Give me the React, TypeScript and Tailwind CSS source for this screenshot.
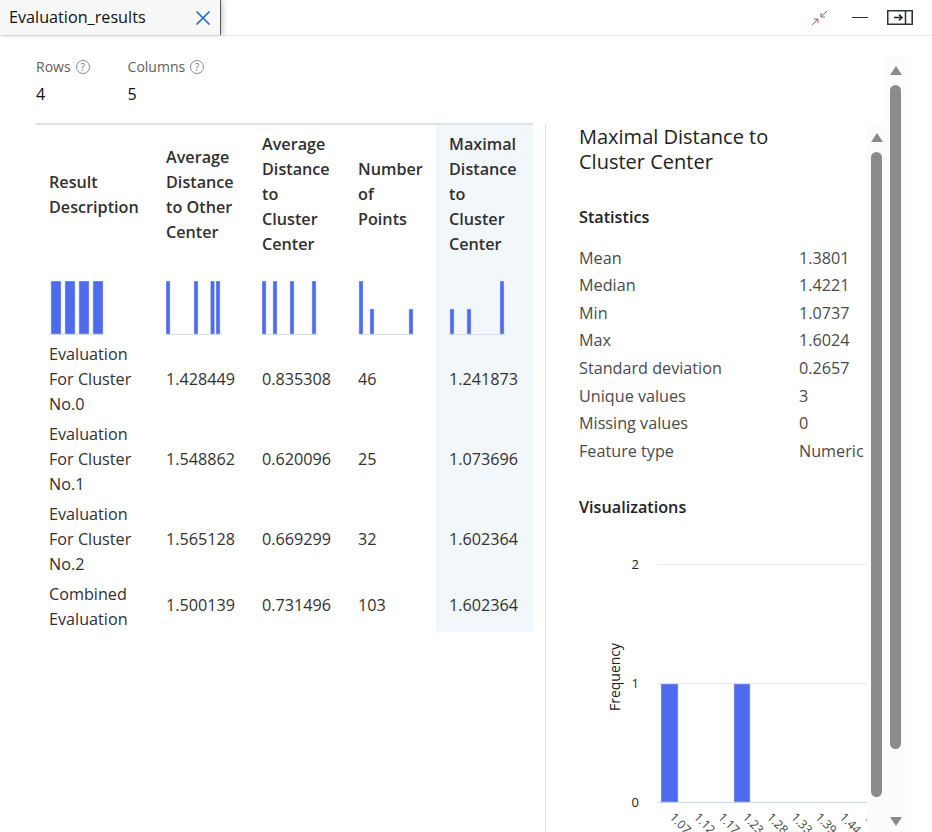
import { X } from "lucide-react"

const rows = [
  { name: ["Evaluation", "For Cluster", "No.0"], a: "1.428449", b: "0.835308", c: "46", d: "1.241873" },
  { name: ["Evaluation", "For Cluster", "No.1"], a: "1.548862", b: "0.620096", c: "25", d: "1.073696" },
  { name: ["Evaluation", "For Cluster", "No.2"], a: "1.565128", b: "0.669299", c: "32", d: "1.602364" },
  { name: ["Combined", "Evaluation"], a: "1.500139", b: "0.731496", c: "103", d: "1.602364" },
]

const stats = [
  ["Mean", "1.3801"],
  ["Median", "1.4221"],
  ["Min", "1.0737"],
  ["Max", "1.6024"],
  ["Standard deviation", "0.2657"],
  ["Unique values", "3"],
  ["Missing values", "0"],
  ["Feature type", "Numeric"],
]

// [x, height, width] for every bar of the mini charts
const sparks = [
  { bars: [[2, 53, 10], [16, 53, 10], [30, 53, 10], [44, 53, 10]] },
  { bars: [[0, 53, 4], [28, 53, 4], [44.5, 53, 4], [50, 53, 4]] },
  { bars: [[0, 53, 4], [11, 53, 4], [28, 53, 4], [50, 53, 4]] },
  { bars: [[1, 53, 4], [12, 25, 4], [51, 25, 4]] },
  { bars: [[1, 25, 4], [18, 25, 4], [51, 53, 4]] },
]

const xLabels = ["1.07", "1.12", "1.17", "1.23", "1.28", "1.33", "1.39", "1.44", "1.49"]

function Spark({ bars }: { bars: number[][] }) {
  return (
    <svg width="56" height="56" viewBox="0 0 56 56" className="block">
      <line x1="0" x2="56" y1="53.5" y2="53.5" stroke="#d5dcf3" strokeWidth="1" />
      {bars.map(([x, h, w]) => (
        <rect key={x} x={x} y={53 - h} width={w} height={h} fill="#4f6bed" stroke="#c3cdf7" strokeWidth="0.5" />
      ))}
    </svg>
  )
}

function HelpIcon() {
  return (
    <span className="inline-flex w-[14px] h-[14px] items-center justify-center rounded-full border border-[#8a8a8a] text-[10px] leading-none text-[#777]">
      ?
    </span>
  )
}

function Scrollbar({ thumbH, down }: { thumbH: string; down?: boolean }) {
  return (
    <div className="flex flex-col items-center h-full bg-[#fcfcfc]">
      <div className="w-0 h-0 border-x-[6px] border-x-transparent border-b-[9px] border-b-[#8b8b8b] mt-[10px] mb-[10px]" />
      <div className={`w-[11px] rounded-full bg-[#8b8b8b] ${thumbH}`} />
      {down && <div className="w-0 h-0 border-x-[6px] border-x-transparent border-t-[9px] border-t-[#8b8b8b] mt-[68px]" />}
    </div>
  )
}

function Histogram() {
  return (
    <svg width="288" height="310" viewBox="0 0 288 310" className="block shrink-0 mt-[2px]">
      <line x1="79" x2="288" y1="42.5" y2="42.5" stroke="#eeeeee" />
      <line x1="79" x2="288" y1="161.5" y2="161.5" stroke="#e6e6e6" />
      <line x1="79" x2="288" y1="280.5" y2="280.5" stroke="#ccd6eb" />
      <text x="60" y="47" textAnchor="end" fontSize="13" fill="#222">2</text>
      <text x="60" y="166" textAnchor="end" fontSize="13" fill="#222">1</text>
      <text x="60" y="285" textAnchor="end" fontSize="13" fill="#222">0</text>
      <text x="0" y="0" transform="translate(41 155) rotate(-90)" textAnchor="middle" fontSize="14" fill="#222">
        Frequency
      </text>
      <rect x="82" y="162" width="17" height="118" fill="#4f6bed" stroke="#c3cdf7" strokeWidth="0.5" />
      <rect x="155" y="162" width="16" height="118" fill="#4f6bed" stroke="#c3cdf7" strokeWidth="0.5" />
      {xLabels.map((label, i) => (
        <text
          key={label}
          x="0"
          y="0"
          transform={`translate(${90 + i * 24.3} 296) rotate(45)`}
          fontSize="12"
          fill="#444"
        >
          {label}
        </text>
      ))}
    </svg>
  )
}

export default function App() {
  return (
    <div className="w-[932px] h-[832px] overflow-hidden bg-white text-[16.2px] text-[#323130] font-['Open_Sans',sans-serif]">
      {/* Title bar */}
      <div className="flex h-[36px] items-start border-b border-[#e6e6e6]">
        <div className="flex h-[35px] w-[221px] items-center justify-between border-r border-[#555] bg-[#f8f8f8] pl-[9px] pr-[5px] shadow-[2px_0_5px_rgba(0,0,0,0.2)]">
          <span className="text-[#111]">Evaluation_results</span>
          <X className="w-[24px] h-[24px] text-[#1a6fd0]" strokeWidth={1.75} />
        </div>
        <div className="flex flex-1 items-center justify-end h-[35px] pr-[19px]">
          <svg width="18" height="16" viewBox="0 0 18 16" fill="none">
            <path d="M1 15 L7 9 M7 9 H3 M7 9 V13" stroke="#a0604a" strokeWidth="1" />
            <path d="M16 1 L10 7 M10 7 H14 M10 7 V3" stroke="#60708a" strokeWidth="1" />
          </svg>
          <div className="ml-[23px] w-[16px] h-[1.5px] bg-[#333]" />
          <svg width="26" height="15" viewBox="0 0 26 15" fill="none" className="ml-[19px]">
            <rect x="0.75" y="0.75" width="24.5" height="13.5" stroke="#333" strokeWidth="1.5" />
            <path d="M18.5 1 V14" stroke="#333" strokeWidth="1.5" />
            <path d="M24.5 1 V14" stroke="#4a90d9" strokeWidth="1" />
            <path d="M7 7.5 H15 M12 4.5 L15 7.5 L12 10.5" stroke="#222" strokeWidth="1.5" />
          </svg>
        </div>
      </div>

      <div className="flex h-[796px]">
        {/* Left pane */}
        <div className="w-[545px] shrink-0 pl-[36px]">
          <div className="flex gap-[38px] pt-[19px] h-[87px]">
            <div>
              <div className="flex items-center gap-[5px] text-[14px] leading-[24px] text-[#605e5c]">
                Rows <HelpIcon />
              </div>
              <div className="mt-[3px] text-[16px] leading-[24px] text-[#111]">4</div>
            </div>
            <div>
              <div className="flex items-center gap-[5px] text-[14px] leading-[24px] text-[#605e5c]">
                Columns <HelpIcon />
              </div>
              <div className="mt-[3px] text-[16px] leading-[24px] text-[#111]">5</div>
            </div>
          </div>

          <table className="w-[497px] table-fixed border-t-2 border-[#e1e1e1] leading-[25px]">
            <colgroup>
              <col className="w-[117px]" />
              <col className="w-[96px]" />
              <col className="w-[96px]" />
              <col className="w-[91px]" />
              <col className="w-[97px]" />
            </colgroup>
            <thead>
              <tr className="h-[140px] text-left">
                <th className="pl-[13px] font-semibold">Result<br />Description</th>
                <th className="pl-[13px] font-semibold">Average<br />Distance<br />to Other<br />Center</th>
                <th className="pl-[13px] font-semibold">Average<br />Distance<br />to<br />Cluster<br />Center</th>
                <th className="pl-[13px] font-semibold">Number<br />of<br />Points</th>
                <th className="pl-[13px] font-semibold bg-[#f2f7fc]">Maximal<br />Distance<br />to<br />Cluster<br />Center</th>
              </tr>
            </thead>
            <tbody>
              <tr className="h-[75px]">
                {sparks.map((s, i) => (
                  <td key={i} className={`align-top pt-[17px] pl-[13px] ${i === 4 ? "bg-[#f2f7fc]" : ""}`}>
                    <Spark bars={s.bars} />
                  </td>
                ))}
              </tr>
              {rows.map((r) => (
                <tr key={r.name.join(" ")} className={r.name.length === 3 ? "h-[80px]" : "h-[53px]"}>
                  <td className={`pl-[13px] ${r.name.length === 3 ? "" : "pt-[3px]"}`}>
                    {r.name.map((line) => (
                      <div key={line}>{line}</div>
                    ))}
                  </td>
                  <td className="pl-[13px]">{r.a}</td>
                  <td className="pl-[13px]">{r.b}</td>
                  <td className="pl-[13px]">{r.c}</td>
                  <td className="pl-[13px] bg-[#f2f7fc]">{r.d}</td>
                </tr>
              ))}
            </tbody>
          </table>
        </div>

        {/* Right pane */}
        <div className="w-[322px] shrink-0 border-l border-[#e1e1e1] mt-[87px] pl-[33px] overflow-hidden">
          <div className="pt-[1px] text-[20px] leading-[25px] text-[#222]">
            Maximal Distance to
            <br />
            Cluster Center
          </div>
          <div className="mt-[31px] font-semibold leading-[25px] text-[#222]">Statistics</div>
          <div className="mt-[14px] w-[288px] overflow-hidden">
            {stats.map(([k, v]) => (
              <div key={k} className="flex h-[27.6px] items-center whitespace-nowrap">
                <div className="w-[220px] shrink-0 text-[#4a4a4a]">{k}</div>
                <div className="text-[#4a4a4a]">{v}</div>
              </div>
            ))}
          </div>
          <div className="mt-[30px] font-semibold leading-[25px] text-[#222]">Visualizations</div>
          <Histogram />
        </div>
        <div className="w-[19px] shrink-0 mt-[87px]">
          <Scrollbar thumbH="h-[645px]" />
        </div>

        {/* Outer scrollbar */}
        <div className="w-[19px] shrink-0 mt-[20px]">
          <Scrollbar thumbH="h-[664px]" down />
        </div>
      </div>
    </div>
  )
}
